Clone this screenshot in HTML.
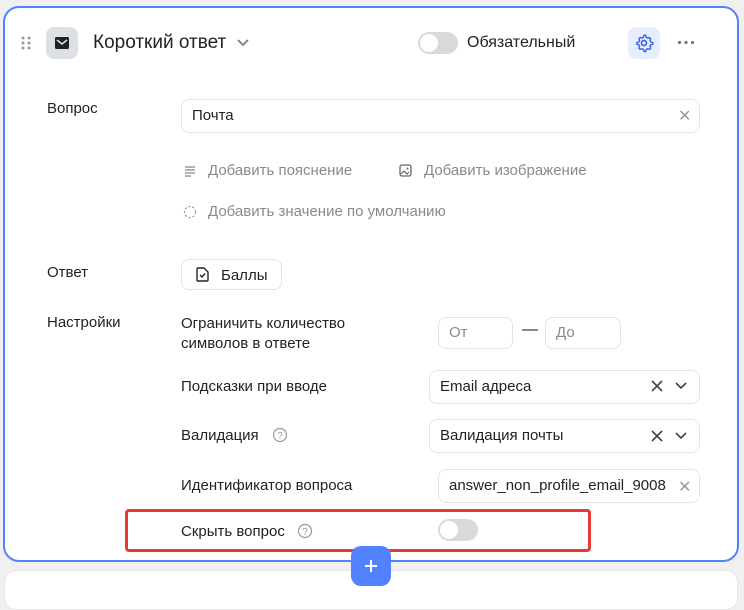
<!DOCTYPE html>
<html><head><meta charset="utf-8"><style>
*{box-sizing:border-box;margin:0;padding:0}
body{width:744px;height:587px;background:#f0f0f0;font-family:"Liberation Sans",sans-serif;color:#222;position:relative;overflow:hidden;font-size:15px}
.a{position:absolute}
.card{left:3px;top:6px;width:736px;height:556px;background:#fff;border:2px solid #5282ff;border-radius:16px}
.card2{left:4px;top:570px;width:734px;height:40px;background:#fff;border-radius:12px;border:1px solid #e6e6e6}
.inp{border:1px solid #e3e3e3;border-radius:8px;background:#fff;height:34px;font-size:15px;line-height:32px;padding-left:10px}
.gray{color:#8a8a8a}
.lbl{font-size:15px}
.tog{width:40px;height:22px;border-radius:11px;background:#d9d9d9}
.tog:after{content:"";position:absolute;left:2px;top:2px;width:18px;height:18px;border-radius:50%;background:#fff}
.x{color:#999;font-size:16px}
</style></head><body>
<div class="a card"></div>
<div class="a card2"></div>
<svg class="a" style="left:20px;top:35px" width="12" height="16"><g fill="#999"><circle cx="3" cy="3" r="1.5"/><circle cx="9" cy="3" r="1.5"/><circle cx="3" cy="8" r="1.5"/><circle cx="9" cy="8" r="1.5"/><circle cx="3" cy="13" r="1.5"/><circle cx="9" cy="13" r="1.5"/></g></svg>
<div class="a" style="left:46px;top:27px;width:32px;height:32px;border-radius:8px;background:#dde1e6"></div>
<svg class="a" style="left:55px;top:37px" width="14" height="12"><rect x="0" y="0" width="14" height="12" rx="1.5" fill="#222"/><path d="M2 3 L7 7 L12 3" stroke="#dde1e6" stroke-width="1.6" fill="none"/></svg>
<div class="a" style="left:93px;top:32px;font-size:19px">Короткий ответ</div>
<svg class="a" style="left:236px;top:38px" width="14" height="10"><path d="M2 2 L7 7 L12 2" stroke="#777" stroke-width="1.6" fill="none"/></svg>
<div class="a tog" style="left:418px;top:32px"></div>
<div class="a" style="left:467px;top:34px;font-size:16px">Обязательный</div>
<div class="a" style="left:628px;top:27px;width:32px;height:32px;border-radius:8px;background:#e6edff"></div>
<svg class="a" style="left:634px;top:33px" width="20" height="20" viewBox="0 0 24 24"><circle cx="12" cy="12" r="3" stroke="#3d6ae0" stroke-width="2" fill="none"/><path d="M12 2.5l2 .3.6 2.3 1.7 1 2.3-.7 1.4 1.5-.7 2.3 1 1.7 2.3.6v2l-2.3.6-1 1.7.7 2.3-1.4 1.5-2.3-.7-1.7 1-.6 2.3h-2l-.6-2.3-1.7-1-2.3.7-1.4-1.5.7-2.3-1-1.7-2.3-.6v-2l2.3-.6 1-1.7-.7-2.3 1.4-1.5 2.3.7 1.7-1 .6-2.3z" stroke="#3d6ae0" stroke-width="1.8" fill="none" stroke-linejoin="round"/></svg>
<svg class="a" style="left:677px;top:40px" width="18" height="5"><g fill="#777"><circle cx="2.5" cy="2.5" r="1.6"/><circle cx="9" cy="2.5" r="1.6"/><circle cx="15.5" cy="2.5" r="1.6"/></g></svg>

<div class="a lbl" style="left:47px;top:100px">Вопрос</div>
<div class="a inp" style="left:181px;top:99px;width:519px">Почта</div>
<div class="a x" style="left:678px;top:106px">✕</div>

<svg class="a" style="left:184px;top:165px" width="12" height="12"><path d="M1 2h10M1 5h10M1 8h10M1 11h6" stroke="#888" stroke-width="1.2"/></svg>
<div class="a gray" style="left:208px;top:162px">Добавить пояснение</div>
<svg class="a" style="left:399px;top:164px" width="13" height="13"><rect x="1" y="1" width="11" height="11" rx="2" stroke="#666" stroke-width="1.3" fill="none"/><path d="M2 10l3-3 3 3 2-2" stroke="#666" stroke-width="1.2" fill="none"/><circle cx="8.5" cy="4.5" r="1" fill="#666"/></svg>
<div class="a gray" style="left:424px;top:162px">Добавить изображение</div>
<svg class="a" style="left:183px;top:205px" width="14" height="14"><circle cx="7" cy="7" r="5.5" stroke="#999" stroke-width="1.2" fill="none" stroke-dasharray="2 2"/></svg>
<div class="a gray" style="left:208px;top:203px">Добавить значение по умолчанию</div>

<div class="a lbl" style="left:47px;top:264px">Ответ</div>
<div class="a" style="left:181px;top:259px;width:101px;height:31px;border:1px solid #e3e3e3;border-radius:8px"></div>
<svg class="a" style="left:196px;top:267px" width="13" height="15"><path d="M2 1h6l4 4v8a1 1 0 0 1-1 1H2a1 1 0 0 1-1-1V2a1 1 0 0 1 1-1z" stroke="#222" stroke-width="1.4" fill="none"/><path d="M4 8l2 2 3-3.5" stroke="#222" stroke-width="1.4" fill="none"/></svg>
<div class="a" style="left:221px;top:267px">Баллы</div>

<div class="a lbl" style="left:47px;top:314px">Настройки</div>
<div class="a" style="left:181px;top:314px;line-height:20px">Ограничить количество<br>символов в ответе</div>
<div class="a inp gray" style="left:438px;top:317px;width:75px;height:32px;line-height:30px">От</div>
<div class="a" style="left:522px;top:321px;font-size:16px">—</div>
<div class="a inp gray" style="left:545px;top:317px;width:76px;height:32px;line-height:30px">До</div>

<div class="a" style="left:181px;top:378px">Подсказки при вводе</div>
<div class="a inp" style="left:429px;top:370px;width:271px">Email адреса</div>
<svg class="a" style="left:651px;top:380px" width="12" height="12"><path d="M1 1L11 11M11 1L1 11" stroke="#444" stroke-width="1.6"/></svg>
<svg class="a" style="left:674px;top:381px" width="14" height="10"><path d="M2 2 L7 7 L12 2" stroke="#444" stroke-width="1.6" fill="none"/></svg>

<div class="a" style="left:181px;top:427px">Валидация</div>
<svg class="a" style="left:272px;top:427px" width="16" height="16"><circle cx="8" cy="8" r="6.5" stroke="#999" stroke-width="1.2" fill="none"/><text x="8" y="12" font-size="10" text-anchor="middle" fill="#999" font-family="Liberation Sans">?</text></svg>
<div class="a inp" style="left:429px;top:419px;width:271px">Валидация почты</div>
<svg class="a" style="left:651px;top:430px" width="12" height="12"><path d="M1 1L11 11M11 1L1 11" stroke="#444" stroke-width="1.6"/></svg>
<svg class="a" style="left:674px;top:431px" width="14" height="10"><path d="M2 2 L7 7 L12 2" stroke="#444" stroke-width="1.6" fill="none"/></svg>

<div class="a" style="left:181px;top:477px">Идентификатор вопроса</div>
<div class="a inp" style="left:438px;top:469px;width:262px;overflow:hidden;white-space:nowrap;padding-right:26px">answer_non_profile_email_9008</div>
<div class="a" style="left:673px;top:473px;width:26px;height:26px;background:#fff"></div>
<div class="a x" style="left:678px;top:477px">✕</div>

<div class="a" style="left:125px;top:509px;width:466px;height:43px;border:3px solid #e53935;border-radius:4px"></div>
<div class="a" style="left:181px;top:523px">Скрыть вопрос</div>
<svg class="a" style="left:297px;top:523px" width="16" height="16"><circle cx="8" cy="8" r="6.5" stroke="#999" stroke-width="1.2" fill="none"/><text x="8" y="12" font-size="10" text-anchor="middle" fill="#999" font-family="Liberation Sans">?</text></svg>
<div class="a tog" style="left:438px;top:519px;width:40px"></div>

<div class="a" style="left:351px;top:546px;width:40px;height:40px;border-radius:10px;background:#5282ff"></div>
<svg class="a" style="left:363px;top:558px" width="16" height="16"><path d="M8 2v12M2 8h12" stroke="#fff" stroke-width="2"/></svg>
</body></html>
